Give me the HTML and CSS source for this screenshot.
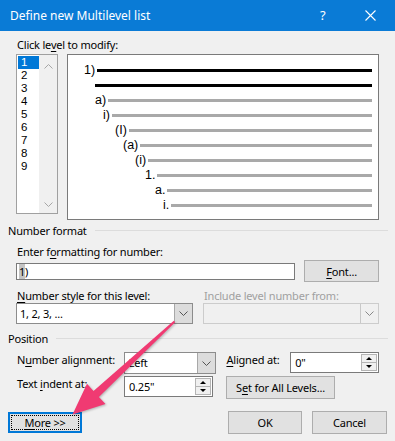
FILE: index.html
```html
<!DOCTYPE html>
<html lang="en">

<head>
    <meta charset="UTF-8">
    <title>Define new Multilevel list</title>
    <link rel="stylesheet" href="styles.css">
</head>

<body>
    <div class="dialog">
        <div class="titlebar">
            <span class="title">Define new Multilevel list</span>
            <span class="help">?</span>
            <span class="close">
                <svg width="11" height="11" viewBox="0 0 11 11"><path d="M0.5 0.5 L10.5 10.5 M10.5 0.5 L0.5 10.5" stroke="#fff" stroke-width="1.1" fill="none"/></svg>
            </span>
        </div>

        <div class="content">
            <div class="label first">Click le<u>v</u>el to modify:</div>
            <div class="levels">
                <div class="listbox">
                    <ul class="items">
                        <li class="sel">1</li>
                        <li>2</li>
                        <li>3</li>
                        <li>4</li>
                        <li>5</li>
                        <li>6</li>
                        <li>7</li>
                        <li>8</li>
                        <li>9</li>
                    </ul>
                    <div class="scroll">
                        <svg width="9" height="5" viewBox="0 0 9 5"><polyline points="0.5,4.5 4.5,0.5 8.5,4.5" stroke="#a6a6a6" fill="none"/></svg>
                        <svg width="9" height="5" viewBox="0 0 9 5"><polyline points="0.5,0.5 4.5,4.5 8.5,0.5" stroke="#a6a6a6" fill="none"/></svg>
                    </div>
                </div>

                <div class="preview">
                    <div class="prow p1 dark"><span>1)</span><i></i></div>
                    <div class="prow p2 dark"><i></i></div>
                    <div class="prow p3"><span>a)</span><i></i></div>
                    <div class="prow p4"><span>i)</span><i></i></div>
                    <div class="prow p5"><span>(I)</span><i></i></div>
                    <div class="prow p6"><span>(a)</span><i></i></div>
                    <div class="prow p7"><span>(i)</span><i></i></div>
                    <div class="prow p8"><span>1.</span><i></i></div>
                    <div class="prow p9"><span>a.</span><i></i></div>
                    <div class="prow p10"><span>i.</span><i></i></div>
                </div>
            </div>

            <div class="group">Number format</div>
            <div class="label">Enter f<u>o</u>rmatting for number:</div>
            <div class="row fmt">
                <div class="textbox fmt-box"><span class="hl">1</span>)</div>
                <button class="btn font-btn"><u>F</u>ont...</button>
            </div>

            <div class="cols">
                <div class="col">
                    <div class="label"><u>N</u>umber style for this level:</div>
                    <div class="combo">
                        <span class="value">1, 2, 3, ...</span>
                        <span class="drop hot"><svg width="9" height="5" viewBox="0 0 9 5"><polyline points="0.5,0.5 4.5,4.5 8.5,0.5" stroke="#555" fill="none"/></svg></span>
                    </div>
                </div>
                <div class="col off">
                    <div class="label">Include level number from:</div>
                    <div class="combo">
                        <span class="value"></span>
                        <span class="drop"><svg width="9" height="5" viewBox="0 0 9 5"><polyline points="0.5,0.5 4.5,4.5 8.5,0.5" stroke="#888" fill="none"/></svg></span>
                    </div>
                </div>
            </div>

            <div class="group">Position</div>
            <div class="row pos1">
                <div class="rlabel">N<u>u</u>mber alignment:</div>
                <div class="combo align">
                    <span class="value">Left</span>
                    <span class="drop hot"><svg width="9" height="5" viewBox="0 0 9 5"><polyline points="0.5,0.5 4.5,4.5 8.5,0.5" stroke="#555" fill="none"/></svg></span>
                </div>
                <div class="rlabel at"><u>A</u>ligned at:</div>
                <div class="spin">
                    <span class="value">0"</span>
                    <span class="arrows"><b class="up"></b><b class="down"></b></span>
                </div>
            </div>
            <div class="row pos2">
                <div class="rlabel">Text <u>i</u>ndent at:</div>
                <div class="spin">
                    <span class="value">0.25"</span>
                    <span class="arrows"><b class="up"></b><b class="down"></b></span>
                </div>
                <button class="btn setall">S<u>e</u>t for All Levels...</button>
            </div>

            <div class="row buttons">
                <button class="btn more"><u>M</u>ore &gt;&gt;</button>
                <span class="spacer"></span>
                <button class="btn ok">OK</button>
                <button class="btn cancel">Cancel</button>
            </div>
        </div>

        <!-- annotation arrow drawn over the dialog -->
        <svg class="pointer" width="395" height="441" viewBox="0 0 395 441">
            <polygon points="175.2,322.2 98.9,396.9 105.5,404 72.5,414.5 87,383.8 93.5,390.9 173.8,320.8" fill="#f03a72"/>
        </svg>
    </div>
</body>

</html>
```

FILE: styles.css
```css
/* Global */
body {
    margin: 0;
    padding: 0;
    background-color: #f0f0f0;
    font-family: "Noto Sans", sans-serif;
    font-size: 11px;
    line-height: 15px;
    letter-spacing: -0.2px;
    color: #000;
}

u {
    text-decoration-thickness: 1px;
    text-underline-offset: 2px;
}

.dialog {
    position: relative;
    width: 395px;
    height: 441px;
    overflow: hidden;
}

/* Title bar */
.titlebar {
    height: 31px;
    background-color: #0a7bd6;
    color: #fff;
    display: flex;
    align-items: center;
    letter-spacing: 0;
}

.title {
    margin-left: 10px;
    font-size: 12px;
    flex: 1;
}

.help {
    font-size: 13px;
    width: 12px;
    margin-right: 33px;
}

.close {
    display: flex;
    margin-right: 19px;
}

/* Content */
.content {
    padding: 0 16px;
}

.label {
    height: 15px;
    margin-top: 6px;
    padding-left: 1px;
}

.levels {
    display: flex;
    gap: 9px;
    margin-top: 2px;
}

.listbox {
    width: 40px;
    height: 158px;
    border: 1px solid #a0a0a0;
    background-color: #fff;
    display: flex;
}

.items {
    list-style: none;
    margin: 0;
    padding: 1px 0 0 1px;
    width: 21px;
    font-family: "Liberation Sans", sans-serif;
    font-size: 11.5px;
    letter-spacing: 0;
}

.items li {
    height: 13px;
    line-height: 13px;
    padding-left: 3px;
}

.items li.sel {
    background-color: #0078d7;
    color: #fff;
}

.scroll {
    flex: 1;
    background-color: #f0f0f0;
    display: flex;
    flex-direction: column;
    justify-content: space-between;
    align-items: center;
    padding: 9px 0 6px;
}

.preview {
    width: 310px;
    height: 156px;
    border: 1px solid #7a7a7a;
    background-color: #fff;
    padding-top: 8px;
}

.prow {
    display: flex;
    align-items: center;
    height: 15px;
    padding-right: 6px;
    font-family: "Liberation Sans", sans-serif;
    font-size: 12.5px;
    letter-spacing: 0;
}

.prow span {
    margin-right: 2px;
}

.prow i {
    flex: 1;
    height: 3px;
    background-color: #a9a9a9;
}

.prow.dark i {
    background-color: #000;
}

.p1 { padding-left: 16px; }
.p2 { padding-left: 27px; }
.p3 { padding-left: 27px; }
.p4 { padding-left: 35px; }
.p5 { padding-left: 47px; }
.p6 { padding-left: 55px; }
.p7 { padding-left: 67px; }
.p8 { padding-left: 77px; }
.p9 { padding-left: 87px; }
.p10 { padding-left: 95px; }

/* Group headings */
.group {
    display: flex;
    align-items: center;
    margin: 3px -9px 0 -8px;
    height: 15px;
}

.group::after {
    content: "";
    flex: 1;
    border-top: 1px solid #dcdcdc;
    margin-left: 8px;
}

/* Rows of controls */
.row {
    display: flex;
    align-items: flex-start;
}

.fmt {
    margin-top: 1px;
    align-items: center;
    height: 22px;
}

.textbox {
    height: 15px;
    border: 1px solid #7a7a7a;
    background-color: #fff;
    padding-left: 2px;
}

.fmt-box {
    width: 276px;
}

.hl {
    background-color: #c4c4c4;
}

.btn {
    font-family: inherit;
    font-size: 11px;
    line-height: 15px;
    letter-spacing: -0.2px;
    color: #000;
    background-color: #e1e1e1;
    border: 1px solid #adadad;
    padding: 0;
    height: 22px;
}

.font-btn {
    width: 75px;
    margin-left: 9px;
}

.cols {
    display: flex;
    gap: 10px;
}

.col {
    width: 177px;
}

.col.off {
    width: 176px;
}

.col.off .label {
    color: #a0a0a0;
}

.combo {
    display: flex;
    height: 19px;
    border: 1px solid #8c8c8c;
    background-color: #fff;
}

.combo .value {
    flex: 1;
    padding-left: 3px;
    line-height: 19px;
}

.drop {
    width: 17px;
    display: flex;
    align-items: center;
    justify-content: center;
    border-left: 1px solid #c8c8c8;
}

.drop.hot {
    background-color: #dcdcdc;
    border-left: 1px solid #a8a8a8;
}

.col.off .combo {
    background-color: #f0f0f0;
    border-color: #cccccc;
}

.cols + .group {
    margin-top: 7px;
}

.rlabel {
    width: 107px;
    padding-left: 1px;
}

.pos1 {
    margin-top: 6px;
    height: 22px;
}

.combo.align {
    width: 91px;
    height: 20px;
}

.combo.align .value {
    line-height: 20px;
    padding-left: 4px;
}

.rlabel.at {
    width: 64px;
    margin-left: 10px;
    padding-left: 0;
}

.spin {
    display: flex;
    width: 87px;
    height: 19px;
    border: 1px solid #7a7a7a;
    background-color: #fff;
}

.spin .value {
    flex: 1;
    padding-left: 4px;
    line-height: 19px;
}

.arrows {
    width: 14px;
    margin: 1px 1px 1px 0;
    display: flex;
    flex-direction: column;
    border: 1px solid #b4b4b4;
    background-color: #f0f0f0;
}

.arrows b {
    flex: 1;
    display: flex;
    align-items: center;
    justify-content: center;
}

.arrows b.up {
    border-bottom: 1px solid #b4b4b4;
}

.arrows b.up::before {
    content: "";
    border-left: 3px solid transparent;
    border-right: 3px solid transparent;
    border-bottom: 3px solid #000;
}

.arrows b.down::before {
    content: "";
    border-left: 3px solid transparent;
    border-right: 3px solid transparent;
    border-top: 3px solid #000;
}

.pos2 {
    margin-top: 2px;
    height: 23px;
}

.setall {
    width: 109px;
    height: 23px;
    margin-left: 13px;
}

.buttons {
    margin: 12px -8px 0 -8px;
}

.more {
    width: 74px;
    height: 21px;
    margin-top: 1px;
    border: 2px solid #0078d7;
    outline: 1px dotted #000;
    outline-offset: -4px;
}

.spacer {
    flex: 1;
}

.ok {
    width: 74px;
    height: 23px;
}

.cancel {
    width: 75px;
    height: 23px;
    margin-left: 10px;
}

/* Annotation overlay */
.pointer {
    position: absolute;
    top: 0;
    left: 0;
    pointer-events: none;
    filter: drop-shadow(1px 1px 1px rgba(0, 0, 0, 0.25));
}
```
